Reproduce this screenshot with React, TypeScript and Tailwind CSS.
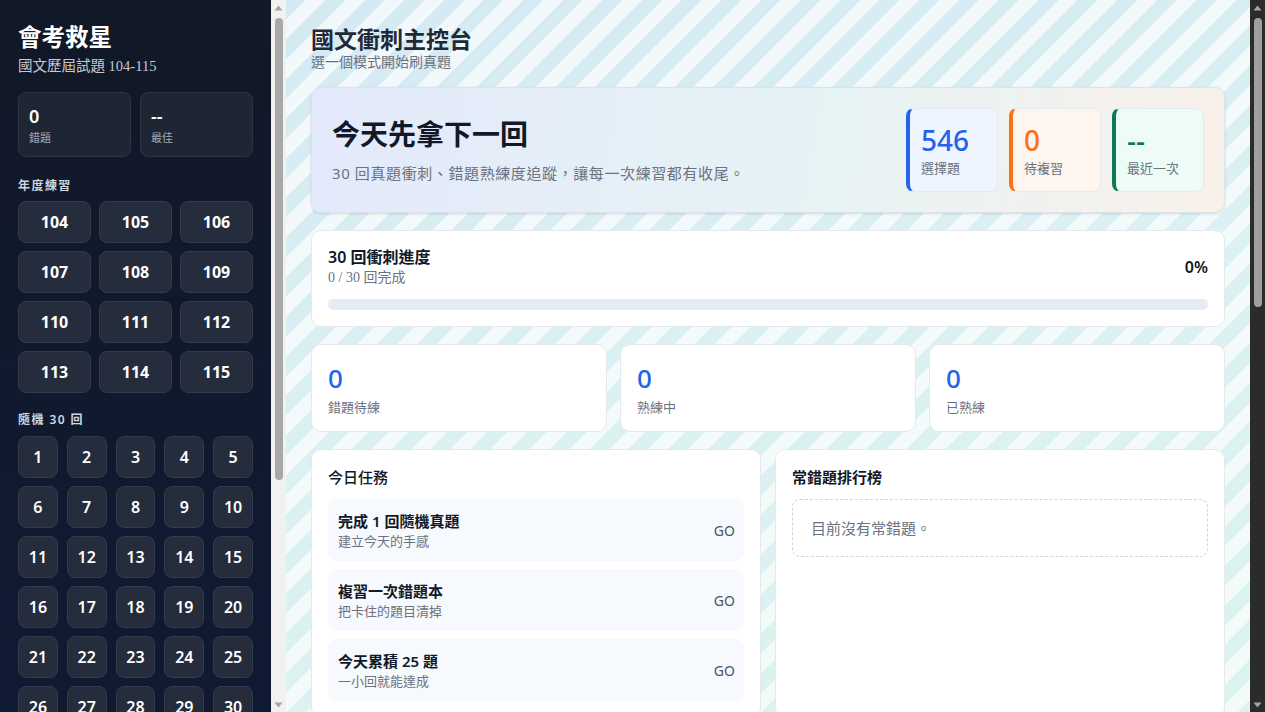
const years = [104, 105, 106, 107, 108, 109, 110, 111, 112, 113, 114, 115];
const rounds = Array.from({ length: 30 }, (_, i) => i + 1);

const tasks = [
  { title: "完成 1 回隨機真題", sub: "建立今天的手感" },
  { title: "複習一次錯題本", sub: "把卡住的題目清掉" },
  { title: "今天累積 25 題", sub: "一小回就能達成" },
];

const serif = "font-['Liberation_Serif','Noto_Sans_CJK_TC',serif]";

// classic scrollbar look (the page's scroll areas are drawn with fixed thumbs)
function Scrollbar({ dark, thumb }: { dark?: boolean; thumb: string }) {
  const arrow = dark ? "#a6a6a6" : "#a3a3a3";
  return (
    <div className={dark ? "flex h-full w-[15px] shrink-0 flex-col bg-[#2b2b2b]" : "flex h-full w-[15px] shrink-0 flex-col bg-[#f1f1f1]"}>
      <div className="flex h-[15px] items-center justify-center">
        <svg width="9" height="6" viewBox="0 0 9 6"><path d="M4.5 0.5 L8.5 5.5 L0.5 5.5 Z" fill={arrow} /></svg>
      </div>
      <div className="flex-1 pt-[3px]">
        <div className={dark ? `mx-auto w-[8px] rounded-full bg-[#9f9f9f] ${thumb}` : `mx-auto w-[8px] rounded-full bg-[#a8a8a8] ${thumb}`} />
      </div>
      <div className="flex h-[15px] items-center justify-center">
        <svg width="9" height="6" viewBox="0 0 9 6"><path d="M0.5 0.5 L8.5 0.5 L4.5 5.5 Z" fill={arrow} /></svg>
      </div>
    </div>
  );
}

function Sidebar() {
  return (
    <aside className="w-[271px] shrink-0 h-full overflow-hidden bg-gradient-to-b from-[#111827] to-[#0f1a33] text-white">
      <div className="px-[18px] pt-[22px] pb-8">
        <h1 className="text-[23.5px] leading-[30px] font-bold">會考救星</h1>
        <p className={`mt-[4px] text-[14.5px] leading-[20px] text-[#c3cad6] ${serif}`}>國文歷屆試題 104-115</p>

        {/* stats */}
        <div className="mt-[16px] grid grid-cols-2 gap-[9px]">
          {[
            { v: "0", l: "錯題" },
            { v: "--", l: "最佳" },
          ].map((s) => (
            <div key={s.l} className="h-[65px] rounded-lg border border-[#2c3445] bg-[#1e2533] px-[10px] pt-[11px]">
              <div className="text-[18px] leading-[24px] font-semibold">{s.v}</div>
              <div className="mt-[3px] text-[11px] leading-[14px] text-[#a3acba]">{s.l}</div>
            </div>
          ))}
        </div>

        <div className="mt-[20px] text-[12px] leading-[18px] font-semibold tracking-[0.12em] text-[#cfd5df]">年度練習</div>
        <div className="mt-[6px] grid grid-cols-3 gap-x-[8px] gap-y-[8px]">
          {years.map((y) => (
            <button key={y} className="h-[42px] rounded-lg border border-[#323a4b] bg-[#252c3b] text-[16px] font-bold text-white">
              {y}
            </button>
          ))}
        </div>

        <div className="mt-[18px] text-[12px] leading-[18px] font-semibold tracking-[0.12em] text-[#cfd5df]">隨機 30 回</div>
        <div className="mt-[7px] grid grid-cols-5 gap-x-[9px] gap-y-[8px]">
          {rounds.map((r) => (
            <button key={r} className="h-[42px] rounded-lg border border-[#323a4b] bg-[#252c3b] text-[16px] font-semibold text-white">
              {r}
            </button>
          ))}
        </div>
      </div>
    </aside>
  );
}

function MiniStat({ value, label, tone }: { value: string; label: string; tone: "blue" | "orange" | "green" }) {
  const styles = {
    blue: "border-l-[#2563eb] bg-[#eff5ff] text-[#2563eb]",
    orange: "border-l-[#f97316] bg-[#fff5ef] text-[#f97316]",
    green: "border-l-[#0b7a55] bg-[#edfcf6] text-[#0b7a55]",
  }[tone];
  return (
    <div className={`w-[92px] h-[84px] rounded-lg border border-[#e6e9ef] border-l-4 pl-[11px] pt-[14px] ${styles}`}>
      <div className="text-[28px] leading-[34px] font-medium">{value}</div>
      <div className="mt-[2px] text-[13px] leading-[18px] text-[#6b7280]">{label}</div>
    </div>
  );
}

function Main() {
  return (
    <main className="flex-1 h-full overflow-hidden bg-[repeating-linear-gradient(135deg,transparent_0_14px,rgba(255,255,255,0.68)_14px_28px),linear-gradient(165deg,#d5e9f3,#dbf1f2_50%,#dbf4ee)]">
      <div className="px-[25px] pt-[24px] pb-10 text-[#1f2937]">
        <h2 className="text-[23px] leading-[30px] font-bold">國文衝刺主控台</h2>
        <p className={`text-[14px] leading-[18px] text-[#6b7280] ${serif}`}>選一個模式開始刷真題</p>

        {/* hero */}
        <section className="mt-[15px] flex items-center justify-between rounded-[10px] border border-[#dde3ec] bg-[linear-gradient(100deg,#e3e9fb,#e6f3f5_55%,#f9f1ea)] p-5 shadow-sm">
          <div>
            <div className="text-[28px] leading-[36px] font-bold text-[#111827]">今天先拿下一回</div>
            <div className="mt-[10px] text-[15px] leading-[22px] tracking-[0.04em] text-[#6b7280]">30 回真題衝刺、錯題熟練度追蹤，讓每一次練習都有收尾。</div>
          </div>
          <div className="flex gap-[11px]">
            <MiniStat value="546" label="選擇題" tone="blue" />
            <MiniStat value="0" label="待複習" tone="orange" />
            <MiniStat value="--" label="最近一次" tone="green" />
          </div>
        </section>

        {/* progress */}
        <section className="mt-[17px] rounded-[10px] border border-[#e5e9ef] bg-white px-4 pt-[15px] pb-4">
          <div className="flex items-center justify-between">
            <div>
              <div className="text-[16px] leading-[22px] font-semibold text-[#111827]">30 回衝刺進度</div>
              <div className={`text-[14px] leading-[20px] text-[#6b7280] ${serif}`}>0 / 30 回完成</div>
            </div>
            <div className="text-[16px] font-semibold text-[#111827]">0%</div>
          </div>
          <div className="mt-[11px] h-[11px] rounded-full bg-[#e6ecf6]">
            <div className="h-full w-0 rounded-full bg-[#2563eb]" />
          </div>
        </section>

        {/* counters */}
        <section className="mt-[17px] grid grid-cols-3 gap-[13px]">
          {[
            { v: "0", l: "錯題待練" },
            { v: "0", l: "熟練中" },
            { v: "0", l: "已熟練" },
          ].map((c) => (
            <div key={c.l} className="h-[88px] rounded-[10px] border border-[#e5e9ef] bg-white px-4 pt-[17px]">
              <div className="text-[26px] leading-[32px] font-medium text-[#2563eb]">{c.v}</div>
              <div className="mt-[4px] text-[13px] leading-[18px] text-[#6b7280]">{c.l}</div>
            </div>
          ))}
        </section>

        {/* tasks + ranking */}
        <section className="mt-[17px] grid grid-cols-2 gap-[14px]">
          <div className="rounded-[10px] border border-[#e5e9ef] bg-white p-4">
            <div className="text-[15px] leading-[22px] font-medium text-[#111827]">今日任務</div>
            <div className="mt-[11px] flex flex-col gap-[8px]">
              {tasks.map((t) => (
                <div key={t.title} className="flex h-[62px] items-center justify-between rounded-lg bg-[#f6f9fd] pl-[10px] pr-[9px]">
                  <div>
                    <div className="text-[15px] leading-[22px] font-semibold text-[#111827]">{t.title}</div>
                    <div className="text-[13px] leading-[18px] text-[#6b7280]">{t.sub}</div>
                  </div>
                  <span className="text-[14px] font-normal text-[#4b5563]">GO</span>
                </div>
              ))}
            </div>
          </div>
          <div className="rounded-[10px] border border-[#e5e9ef] bg-white p-4">
            <div className="text-[15px] leading-[22px] font-semibold text-[#111827]">常錯題排行榜</div>
            <div className="mt-[11px] flex h-[58px] items-center rounded-lg border border-dashed border-[#d1d5db] px-[18px] text-[15px] text-[#6b7280]">
              目前沒有常錯題。
            </div>
          </div>
        </section>
      </div>
    </main>
  );
}

export default function App() {
  return (
    <div className="flex h-screen w-full overflow-hidden font-['Noto_Sans','Noto_Sans_CJK_TC',sans-serif]">
      <Sidebar />
      <Scrollbar thumb="h-[462px]" />
      <Main />
      <Scrollbar dark thumb="h-[289px]" />
    </div>
  );
}
